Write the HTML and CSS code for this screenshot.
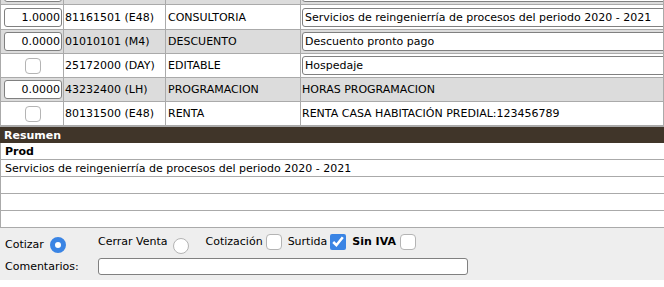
FILE: index.html
```html
<!DOCTYPE html>
<html lang="es">
  <head>
    <meta charset="UTF-8" />
    <title>Cotización</title>
    <link rel="stylesheet" href="styles.css">
  </head>
  <body>
    <div class="page">
      <table class="items">
        <tr class="alt">
          <td class="qty"><input type="text" class="qty-input" /></td>
          <td></td>
          <td></td>
          <td><input type="text" class="desc-input" /></td>
        </tr>
        <tr class="first">
          <td class="qty"><input type="text" class="qty-input" value="1.0000" /></td>
          <td>81161501 (E48)</td>
          <td>CONSULTORIA</td>
          <td><input type="text" class="desc-input" value="Servicios de reingenierría de procesos del periodo 2020 - 2021" /></td>
        </tr>
        <tr class="alt">
          <td class="qty"><input type="text" class="qty-input" value="0.0000" /></td>
          <td>01010101 (M4)</td>
          <td>DESCUENTO</td>
          <td><input type="text" class="desc-input" value="Descuento pronto pago" /></td>
        </tr>
        <tr>
          <td class="qty"><input type="checkbox" class="chk" /></td>
          <td>25172000 (DAY)</td>
          <td>EDITABLE</td>
          <td><input type="text" class="desc-input" value="Hospedaje" /></td>
        </tr>
        <tr class="alt">
          <td class="qty"><input type="text" class="qty-input" value="0.0000" /></td>
          <td>43232400 (LH)</td>
          <td>PROGRAMACION</td>
          <td>HORAS PROGRAMACION</td>
        </tr>
        <tr>
          <td class="qty"><input type="checkbox" class="chk" /></td>
          <td>80131500 (E48)</td>
          <td>RENTA</td>
          <td>RENTA CASA HABITACIÓN PREDIAL:123456789</td>
        </tr>
      </table>

      <div class="summary">
        <div class="summary-head">Resumen</div>
        <div class="summary-row bold">Prod</div>
        <div class="summary-row">Servicios de reingenierría de procesos del periodo 2020 - 2021</div>
        <div class="summary-row"></div>
        <div class="summary-row"></div>
        <div class="summary-row"></div>
      </div>

      <div class="options">
        <div class="option-line">
          <label class="opt opt-cotizar">
            <span class="txt">Cotizar</span>
            <input type="radio" class="rad" name="tipo" checked />
          </label>
          <label class="opt opt-venta">
            <span class="txt">Cerrar Venta</span>
            <input type="radio" class="rad" name="tipo" />
          </label>
          <label class="opt opt-flag">
            <span class="txt">Cotización</span>
            <input type="checkbox" class="chk" />
          </label>
          <label class="opt opt-flag">
            <span class="txt">Surtida</span>
            <input type="checkbox" class="chk" checked />
          </label>
          <label class="opt opt-flag opt-iva">
            <span class="txt bold">Sin IVA</span>
            <input type="checkbox" class="chk" />
          </label>
        </div>
        <div class="option-line comments">
          <span class="comment-label">Comentarios:</span>
          <input type="text" class="comment-input" />
        </div>
      </div>
    </div>
  </body>
</html>
```

FILE: styles.css
```css
body {
  margin: 0;
  font-family: "DejaVu Sans", Verdana, sans-serif;
  font-size: 11px;
  line-height: 13px;
  color: #000;
  background-color: #fff;
}
.page {
  width: 664px;
  overflow: hidden;
}
.items {
  width: 100%;
  border-collapse: collapse;
  margin-top: -20px;
  table-layout: fixed;
}
.items td {
  border: 1px solid #aaa;
  padding: 0 0 0 1px;
  height: 23px;
  white-space: nowrap;
}
.items tr.first td {
  height: 24px;
}
.items td:nth-child(1) {
  width: 61px;
}
.items td:nth-child(2) {
  width: 100px;
}
.items td:nth-child(3) {
  width: 132px;
  padding-left: 2px;
}
.items tr.alt td {
  background-color: #dcdcdc;
}
.qty {
  text-align: center;
}
.qty-input {
  width: 58px;
  height: 19px;
  box-sizing: border-box;
  margin: 0 0 0 2px;
  text-align: right;
  font: inherit;
  border: 1px solid #808080;
  border-radius: 3px;
  padding: 0 1px;
  display: block;
  background-color: #fff;
}
.desc-input {
  width: 380px;
  height: 19px;
  box-sizing: border-box;
  font: inherit;
  border: 1px solid #808080;
  border-radius: 3px;
  padding: 0 2px;
  margin: 0;
  display: block;
  background-color: #fff;
}
.chk {
  width: 16px;
  height: 16px;
  margin: 0;
  vertical-align: middle;
  accent-color: #3a84e4;
}
.chk:not(:checked) {
  appearance: none;
  border: 1px solid #b4b4b4;
  border-radius: 4px;
  background-color: #fff;
}
.rad {
  appearance: none;
  width: 16px;
  height: 16px;
  margin: 0;
  border: 1px solid #b4b4b4;
  border-radius: 50%;
  background-color: #fff;
  box-sizing: border-box;
}
.rad:checked {
  border: 5px solid #3a84e4;
}
.summary {
  border-top: 1px solid #aaa;
}
.summary-head {
  background-color: #403529;
  color: #fff;
  font-weight: bold;
  padding: 2px 4px 1px;
  height: 13px;
}
.summary-row {
  border-left: 1px solid #aaa;
  border-bottom: 1px solid #aaa;
  padding: 2px 4px 1px;
  height: 13px;
  white-space: nowrap;
}
.bold {
  font-weight: bold;
}
.options {
  background-color: #eee;
  padding: 5px 0 3px 5px;
}
.option-line {
  display: flex;
  align-items: flex-start;
  height: 20px;
}
.opt {
  display: flex;
  align-items: flex-start;
}
.opt-cotizar {
  width: 93px;
}
.opt-cotizar .txt {
  margin: 5px 6px 0 0;
}
.opt-cotizar .rad {
  margin-top: 4px;
}
.opt-venta {
  margin-right: 17px;
}
.opt-venta .txt {
  margin: 2px 5px 0 0;
}
.opt-venta .rad {
  margin-top: 5px;
}
.opt-flag {
  margin-right: 6px;
}
.opt-flag .txt {
  margin: 2px 3px 0 0;
}
.opt-iva .txt {
  margin-right: 4px;
}
.opt-flag .chk {
  margin-top: 1px;
}
.comments {
  height: 21px;
  align-items: center;
  margin-top: 3px;
}
.comment-label {
  width: 93px;
}
.comment-input {
  width: 370px;
  height: 17px;
  box-sizing: border-box;
  border: 1px solid #808080;
  border-radius: 3px;
  margin: 0;
  background-color: #fff;
}
```
